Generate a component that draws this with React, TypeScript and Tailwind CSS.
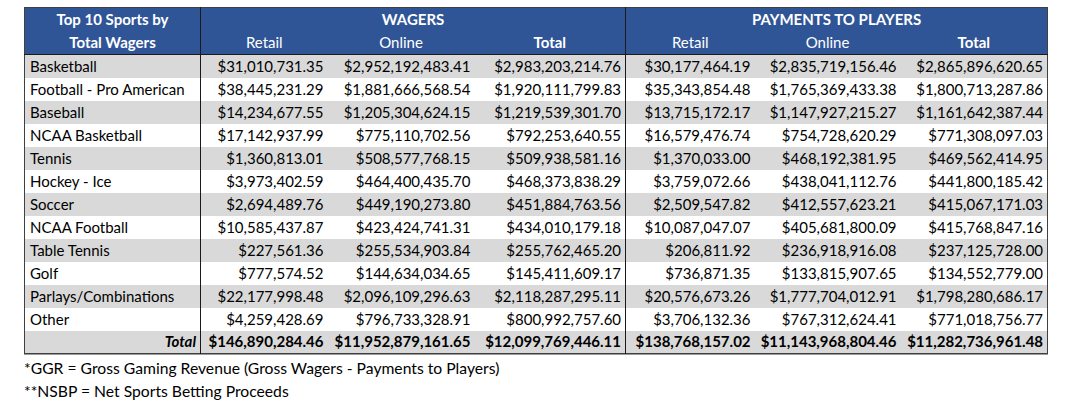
const rows: [string, string, string, string, string, string, string][] = [
  ["Basketball", "$31,010,731.35", "$2,952,192,483.41", "$2,983,203,214.76", "$30,177,464.19", "$2,835,719,156.46", "$2,865,896,620.65"],
  ["Football - Pro American", "$38,445,231.29", "$1,881,666,568.54", "$1,920,111,799.83", "$35,343,854.48", "$1,765,369,433.38", "$1,800,713,287.86"],
  ["Baseball", "$14,234,677.55", "$1,205,304,624.15", "$1,219,539,301.70", "$13,715,172.17", "$1,147,927,215.27", "$1,161,642,387.44"],
  ["NCAA Basketball", "$17,142,937.99", "$775,110,702.56", "$792,253,640.55", "$16,579,476.74", "$754,728,620.29", "$771,308,097.03"],
  ["Tennis", "$1,360,813.01", "$508,577,768.15", "$509,938,581.16", "$1,370,033.00", "$468,192,381.95", "$469,562,414.95"],
  ["Hockey - Ice", "$3,973,402.59", "$464,400,435.70", "$468,373,838.29", "$3,759,072.66", "$438,041,112.76", "$441,800,185.42"],
  ["Soccer", "$2,694,489.76", "$449,190,273.80", "$451,884,763.56", "$2,509,547.82", "$412,557,623.21", "$415,067,171.03"],
  ["NCAA Football", "$10,585,437.87", "$423,424,741.31", "$434,010,179.18", "$10,087,047.07", "$405,681,800.09", "$415,768,847.16"],
  ["Table Tennis", "$227,561.36", "$255,534,903.84", "$255,762,465.20", "$206,811.92", "$236,918,916.08", "$237,125,728.00"],
  ["Golf", "$777,574.52", "$144,634,034.65", "$145,411,609.17", "$736,871.35", "$133,815,907.65", "$134,552,779.00"],
  ["Parlays/Combinations", "$22,177,998.48", "$2,096,109,296.63", "$2,118,287,295.11", "$20,576,673.26", "$1,777,704,012.91", "$1,798,280,686.17"],
  ["Other", "$4,259,428.69", "$796,733,328.91", "$800,992,757.60", "$3,706,132.36", "$767,312,624.41", "$771,018,756.77"],
];

const totals = ["$146,890,284.46", "$11,952,879,161.65", "$12,099,769,446.11", "$138,768,157.02", "$11,143,968,804.46", "$11,282,736,961.48"];

export default function App() {
  return (
    <div className="min-h-screen bg-white pt-[7px] pl-[24px] text-[15px] leading-none text-black [font-family:Lato,'Open_Sans',sans-serif]">
      <table className="table-fixed w-[1023px] border-collapse border border-[#404040] shadow-[0_1px_0_#9a9a9a]">
        <colgroup>
          <col className="w-[176px]" />
          <col className="w-[127px]" />
          <col className="w-[147px]" />
          <col className="w-[151px]" />
          <col className="w-[129px]" />
          <col className="w-[146px]" />
          <col className="w-[147px]" />
        </colgroup>
        <thead className="bg-[#2F5597] text-white">
          <tr className="h-[23px]">
            <th rowSpan={2} className="border-r border-[#1a1a1a] font-bold leading-[23px] align-middle text-center">
              Top 10 Sports by
              <br />
              Total Wagers
            </th>
            <th colSpan={3} className="border-r border-[#1a1a1a] font-bold text-center pt-[1px]">
              WAGERS
            </th>
            <th colSpan={3} className="font-bold text-center pt-[1px]">
              PAYMENTS TO PLAYERS
            </th>
          </tr>
          <tr className="h-[24px] border-b border-[#1a1a1a]">
            <th className="font-normal text-center">Retail</th>
            <th className="font-normal text-center">Online</th>
            <th className="font-bold text-center border-r border-[#1a1a1a]">Total</th>
            <th className="font-normal text-center">Retail</th>
            <th className="font-normal text-center">Online</th>
            <th className="font-bold text-center">Total</th>
          </tr>
        </thead>
        <tbody>
          {rows.map((r, i) => (
            <tr key={r[0]} className={i % 2 === 0 ? "h-[23px] bg-[#D9D9D9]" : "h-[23px] bg-white"}>
              <td className="pl-[5px] border-r border-[#1a1a1a] whitespace-nowrap">{r[0]}</td>
              {r.slice(1).map((v, j) => (
                <td
                  key={j}
                  className={
                    j === 2
                      ? "pr-[4px] text-right whitespace-nowrap border-r border-[#1a1a1a]"
                      : "pr-[4px] text-right whitespace-nowrap"
                  }
                >
                  {v}
                </td>
              ))}
            </tr>
          ))}
          <tr className="h-[23px] bg-[#D9D9D9] font-bold">
            <td className="pr-[4px] text-right italic border-r border-[#1a1a1a]">Total</td>
            {totals.map((v, j) => (
              <td
                key={j}
                className={
                  j === 2
                    ? "pr-[4px] text-right whitespace-nowrap border-r border-[#1a1a1a]"
                    : "pr-[4px] text-right whitespace-nowrap"
                }
              >
                {v}
              </td>
            ))}
          </tr>
        </tbody>
      </table>
      <div className="mt-[3px] text-[15.7px] leading-[23px]">
        <p>*GGR = Gross Gaming Revenue (Gross Wagers - Payments to Players)</p>
        <p>**NSBP = Net Sports Betting Proceeds</p>
      </div>
    </div>
  );
}
